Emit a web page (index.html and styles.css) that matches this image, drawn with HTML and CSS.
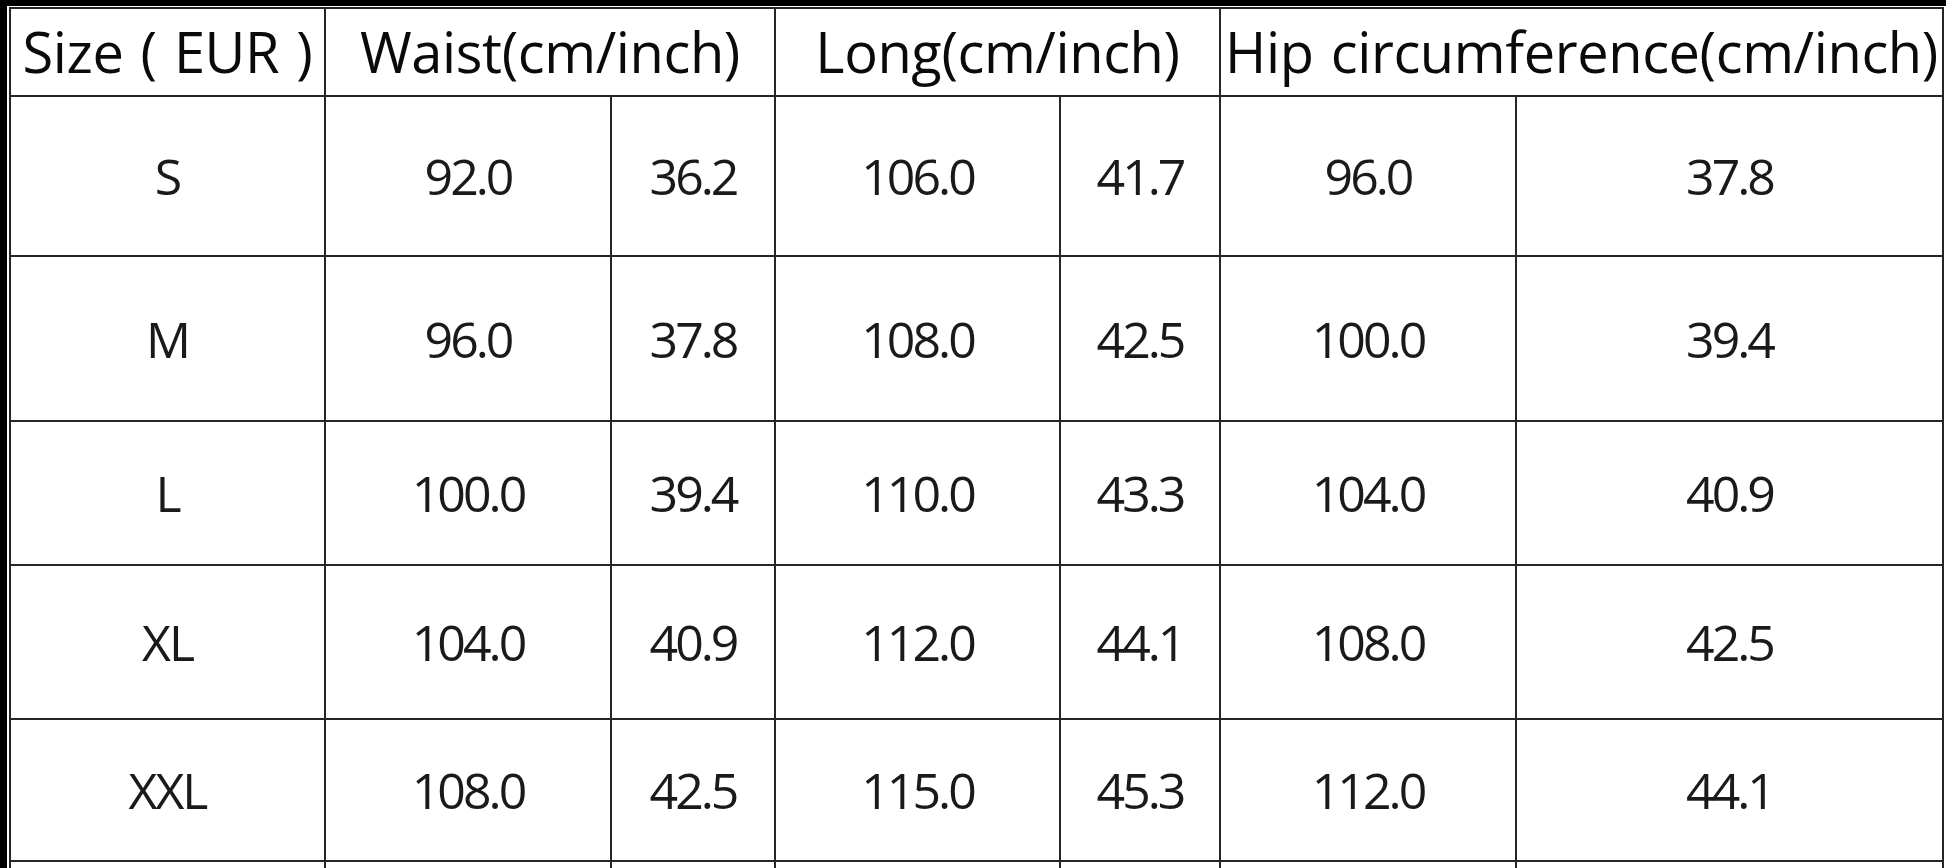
FILE: index.html
```html
<!DOCTYPE html>
<html lang="en">
<head>
<meta charset="utf-8">
<title>Size chart</title>
<link rel="stylesheet" href="styles.css">
</head>
<body>
<div class="sheet">
  <div class="chart">
    <div class="cell head">Size ( EUR )</div>
    <div class="cell head span2">Waist(cm/inch)</div>
    <div class="cell head span2">Long(cm/inch)</div>
    <div class="cell head span2">Hip circumference(cm/inch)</div>

    <div class="cell size">S</div><div class="cell">92.0</div><div class="cell">36.2</div><div class="cell">106.0</div><div class="cell">41.7</div><div class="cell">96.0</div><div class="cell">37.8</div>
    <div class="cell size">M</div><div class="cell">96.0</div><div class="cell">37.8</div><div class="cell">108.0</div><div class="cell">42.5</div><div class="cell">100.0</div><div class="cell">39.4</div>
    <div class="cell size">L</div><div class="cell">100.0</div><div class="cell">39.4</div><div class="cell">110.0</div><div class="cell">43.3</div><div class="cell">104.0</div><div class="cell">40.9</div>
    <div class="cell size">XL</div><div class="cell">104.0</div><div class="cell">40.9</div><div class="cell">112.0</div><div class="cell">44.1</div><div class="cell">108.0</div><div class="cell">42.5</div>
    <div class="cell size">XXL</div><div class="cell">108.0</div><div class="cell">42.5</div><div class="cell">115.0</div><div class="cell">45.3</div><div class="cell">112.0</div><div class="cell">44.1</div>
    <div class="cell"></div><div class="cell"></div><div class="cell"></div><div class="cell"></div><div class="cell"></div><div class="cell"></div><div class="cell"></div>
  </div>
</div>
</body>
</html>
```

FILE: styles.css
```css
html, body {
  margin: 0;
  height: 100%;
  overflow: hidden;
}

body {
  background: #000;
  padding: 6px 0 0 7px;
  box-sizing: border-box;
}

.sheet {
  background: #fff;
  height: 100%;
  padding: 1px 0 0 2px;
  box-sizing: border-box;
}

.chart {
  display: grid;
  grid-template-columns: 313px 284px 162px 283px 158px 294px 425px;
  grid-template-rows: 86px 158px 163px 142px 152px 140px 140px;
  gap: 2px;
  padding: 2px;
  width: max-content;
  background: #262626;
}

.cell {
  background: #fff;
  display: flex;
  align-items: center;
  justify-content: center;
  font-family: "Open Sans", "Noto Sans", sans-serif;
  font-weight: 400;
  font-size: 50px;
  letter-spacing: -3px;
  color: #1a1a1a;
  white-space: nowrap;
}

.size {
  letter-spacing: -2px;
}

.head {
  font-weight: 400;
  font-size: 56px;
  letter-spacing: -0.4px;
  word-spacing: 3px;
  color: #0a0a0a;
  padding-bottom: 2px;
}

.span2 {
  grid-column: span 2;
}
```
